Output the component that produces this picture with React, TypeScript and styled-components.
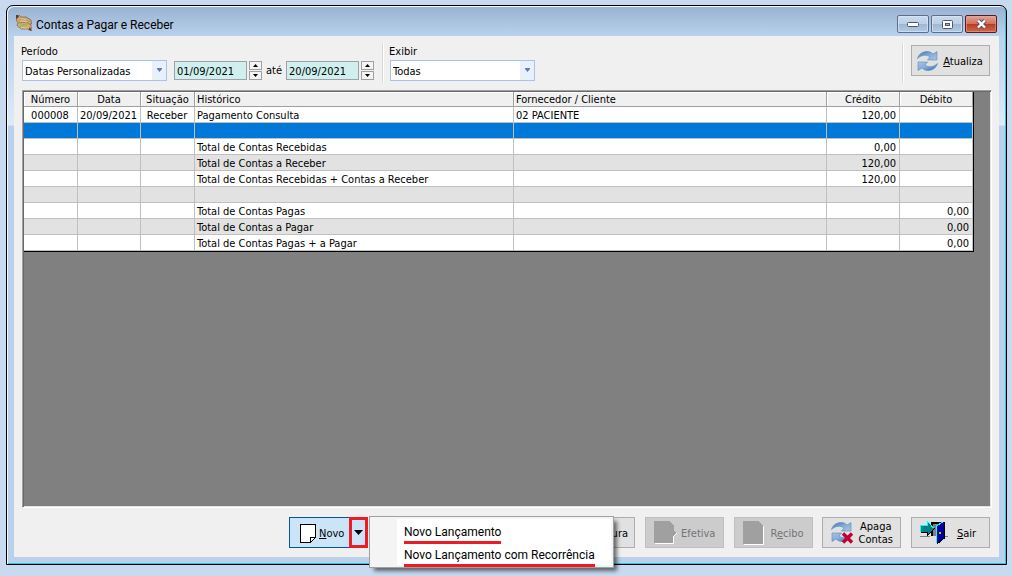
import React from "react";
import styled, { createGlobalStyle, css } from "styled-components";

const uiFont = `"DejaVu Sans Condensed", "Noto Sans", sans-serif`;
const shellFont = `Roboto, "Open Sans", sans-serif`;

const Global = createGlobalStyle`
  *, *::before, *::after { box-sizing: border-box; }
  body { margin: 0; background: #c8daf0; color: #000; font: 11px/14px ${uiFont}; }
  button, input, select { font: inherit; color: inherit; margin: 0; }
`;

const Desktop = styled.div`
  display: flex;
  min-height: 100vh;
  padding: 5px 5px 11px 6px;
`;

const Window = styled.main`
  flex: 1;
  min-width: 0;
  display: flex;
  flex-direction: column;
  padding: 0 7px 7px;
  border: 1px solid #000;
  border-radius: 7px 7px 0 0;
  background: linear-gradient(#97b2d1 0, #b9d1eb 30px, #dfeaf6 119px, #b9d1ea 120px);
  box-shadow: inset 1px 1px 0 #f4f8fc, inset -1px -1px 0 #35c3dd;
`;

const TitleBar = styled.header`
  display: flex;
  align-items: flex-start;
  height: 30px;
  padding: 9px 2px 0;
`;

const Title = styled.h1`
  flex: 1;
  margin: 2px 0 0 4px;
  font: 12px/16px ${shellFont};
`;

const WindowButtons = styled.div`
  display: flex;
  gap: 2px;
`;

const WindowButton = styled.button<{ $close?: boolean }>`
  display: grid;
  place-items: center;
  width: 32px;
  height: 18px;
  padding: 0;
  border: 1px solid ${(p) => (p.$close ? "#5b1a20" : "#5b6f8c")};
  border-radius: 2px;
  background: ${(p) =>
    p.$close
      ? "linear-gradient(#e3a597 0, #d2705c 48%, #b83a20 50%, #cf6a4c 100%)"
      : "linear-gradient(#c9daee 0, #bccfe6 48%, #9cb6d4 50%, #b3cae5 100%)"};
  box-shadow: inset 0 0 0 1px ${(p) => (p.$close ? "#e6a99a88" : "#dce8f5aa")};
`;

const Client = styled.div`
  flex: 1;
  display: flex;
  flex-direction: column;
  background: #f0f0f0;
  padding: 7px 7px 9px;
`;

const FilterBar = styled.div`
  display: flex;
  height: 40px;
`;

const Group = styled.div`
  display: flex;
  flex-direction: column;
`;

const DateGroup = styled(Group)`
  justify-content: flex-end;
  margin: 0 0 2px 7px;
`;

const Label = styled.label`
  line-height: 17px;
`;

const Line = styled.div`
  display: flex;
  align-items: center;
  height: 21px;
`;

const SelectWrap = styled.div`
  position: relative;
  width: 145px;
  height: 21px;
  margin-left: 1px;
`;

const Select = styled.select`
  appearance: none;
  width: 100%;
  height: 100%;
  padding: 2px 18px 0 2px;
  border: 1px solid #a9c2e6;
  border-radius: 0;
  background: linear-gradient(#e8f0fb, #e8f0fb) right / 14px 100% no-repeat #fff;
`;

const SelectArrow = styled.svg`
  position: absolute;
  right: 5px;
  top: 8px;
  pointer-events: none;
`;

const DateInput = styled.input`
  width: 73px;
  height: 19px;
  padding: 2px 2px 0;
  border: 1px solid #a0a0a8;
  background: #cff0ee;
`;

const Spinner = styled.div`
  display: flex;
  flex-direction: column;
  gap: 1px;
  margin-left: 2px;
`;

const SpinButton = styled.button`
  display: grid;
  place-items: center;
  width: 13px;
  height: 9px;
  padding: 0;
  border: 1px solid #a0a0a0;
  background: #f4f4f4;
`;

const Until = styled.span`
  padding: 0 4px;
`;

const Divider = styled.div<{ $after: number }>`
  width: 2px;
  margin: 0 ${(p) => p.$after}px 0 8px;
  border-left: 1px solid #d8d8d8;
  border-right: 1px solid #fff;
`;

const Spacer = styled.div`
  flex: 1;
`;

const RefreshSlot = styled.div`
  padding: 2px 2px 0 0;
`;

const Button = styled.button<{ $tight?: boolean }>`
  display: flex;
  align-items: center;
  width: 79px;
  height: 31px;
  padding: 0 4px 0 ${(p) => (p.$tight ? 5 : 8)}px;
  border: 1px solid #adadad;
  background: #e1e1e1;
  text-align: left;
  line-height: 13px;

  &:disabled {
    border-color: #bfbfbf;
    background: #ccc;
    color: #737378;
  }
`;

const IconSlot = styled.span<{ $wide?: boolean }>`
  flex: none;
  display: flex;
  min-width: ${(p) => (p.$wide ? 30 : 24)}px;
`;

const ButtonText = styled.span`
  flex: 1;
  padding-top: 1px;
  text-align: center;
`;

const GridPanel = styled.section`
  flex: 1;
  margin: 7px 0 0 1px;
  border: 1px solid;
  border-color: #a0a0a0 #fff #fff #a0a0a0;
  box-shadow: inset 1px 1px 0 #696969, inset -1px -1px 0 #e3e3e3;
  padding: 1px 17px 1px 1px;
  background: #808080;
`;

const Grid = styled.table`
  width: 100%;
  table-layout: fixed;
  border-collapse: separate;
  border-spacing: 0;
  border-right: 1px solid #000;
  border-bottom: 1px solid #000;
`;

type Align = "left" | "center" | "right";

const cell = css<{ $align: Align }>`
  font-weight: normal;
  text-align: ${(p) => p.$align};
  white-space: nowrap;
  overflow: hidden;
`;

const HeadCell = styled.th<{ $align: Align }>`
  ${cell}
  height: 15px;
  padding: 1px 2px 0;
  line-height: 13px;
  background: #f0f0f0;
  border-right: 1px solid #a0a0a0;
  border-bottom: 1px solid #a0a0a0;
  box-shadow: inset 1px 1px 0 #fff;
`;

const Cell = styled.td<{ $align: Align }>`
  ${cell}
  height: 16px;
  padding: 2px 3px 0 2px;
  line-height: 13px;
  border-right: 1px solid #c0c0c0;
  border-bottom: 1px solid #c0c0c0;
`;

const rowColors = { plain: "#fff", shaded: "#e2e2e2", selected: "#0078d7" };

const Row = styled.tr<{ $tone: keyof typeof rowColors }>`
  background: ${(p) => rowColors[p.$tone]};
`;

const Footer = styled.footer`
  display: flex;
  justify-content: flex-end;
  padding: 9px 2px 0 0;
`;

const Commands = styled.div`
  display: flex;
  justify-content: space-between;
  width: 701px;
`;

const CommandGroup = styled.div`
  display: flex;
  justify-content: space-between;
  width: 434px;
`;

const SplitButton = styled.div`
  position: relative;
  display: flex;
  width: 79px;
  height: 31px;
`;

const NewButton = styled.button`
  display: flex;
  align-items: center;
  gap: 3px;
  width: 60px;
  padding: 2px 0 0 10px;
  border: 1px solid #00559b;
  border-right: 0;
  background: #cce4f7;
`;

const DropButton = styled.button`
  display: grid;
  place-items: center;
  width: 19px;
  padding: 0;
  border: 3px solid #ed1c24;
  background: #cce4f7;
`;

const Menu = styled.ul`
  position: absolute;
  z-index: 1;
  left: 80px;
  top: -1px;
  width: 245px;
  margin: 0;
  padding: 3px 2px 1px 34px;
  list-style: none;
  border: 1px solid #a0a0a0;
  background: linear-gradient(90deg, #f4f4f4 27px, #fff 27px);
  box-shadow: inset 0 0 0 2px #f4f4f4, 4px 4px 4px -1px rgba(0, 0, 0, 0.55);
`;

const MenuItem = styled.li`
  height: 23px;
`;

const MenuButton = styled.button`
  display: block;
  padding: 3px 0 0;
  border: 0;
  border-bottom: 3px solid #ed1c24;
  background: none;
  font: 12px/18px ${shellFont};
  white-space: nowrap;
`;

const HandsIcon = () => (
  <svg width="16" height="16" viewBox="0 0 16 16">
    <path d="M0 0l3 0 2 2 5 0 5 3 .5 4-3 1-9-1-3-3z" fill="#dba174" stroke="#6e4a30" strokeWidth=".6" />
    <path d="M1 9l3-2 8 1 3 2 .5 5.500-2-.5-2-1-6 0-4-3z" fill="#e0a87c" stroke="#7c5232" strokeWidth=".6" />
    <path d="M3 4.500l6-.5 5 3M2 7.500l5 2 6-.5M3 11h8" fill="none" stroke="#7cc04c" strokeWidth="1" />
    <path d="M5 3.500l5 1M4 6l7 1M5 12.500l6 .5" stroke="#f2d2b2" strokeWidth=".7" />
    <path d="M0 0l2 0 1 2-3 2z" fill="#5a3d2a" />
    <path d="M14 12l1.500 4-3-1.500z" fill="#5a3d2a" />
  </svg>
);

const RefreshArt = () => (
  <>
    <defs>
      <linearGradient id="refreshTop" x1="0" y1="0" x2="1" y2="1">
        <stop offset="0" stopColor="#3c70b0" />
        <stop offset=".5" stopColor="#84abd8" />
        <stop offset="1" stopColor="#a9c6e6" />
      </linearGradient>
      <linearGradient id="refreshBottom" x1="0" y1="0" x2="1" y2="1">
        <stop offset="0" stopColor="#a9c6e6" />
        <stop offset=".5" stopColor="#84abd8" />
        <stop offset="1" stopColor="#2f64a6" />
      </linearGradient>
    </defs>
    <path d="M.5 7.500C2 2.500 6 .3 11 .5q3 .3 5 2.500l4-2.500v8.500h-9.500l2.500-3C9.500 3.500 5 3.500.5 7.500z" fill="url(#refreshTop)" stroke="#5b88bd" strokeWidth=".6" />
    <path d="M20.500 12.500C19 17.500 15 19.700 10 19.500q-3-.3-5-2.500L1 19.500V11h9.500L8 14c3.500 2.500 8 2.500 12.500-1.500z" fill="url(#refreshBottom)" stroke="#5b88bd" strokeWidth=".6" />
  </>
);

const RefreshIcon = () => (
  <svg width="21" height="20" viewBox="0 0 21 20">
    <RefreshArt />
  </svg>
);

const DeleteIcon = () => (
  <svg width="24" height="22" viewBox="0 0 24 22">
    <RefreshArt />
    <path d="M12 11.500l9 9M21 11.500l-9 9" stroke="#c00030" strokeWidth="3.400" />
  </svg>
);

const DoorIcon = () => (
  <svg width="28" height="23" viewBox="0 0 28 23" shapeRendering="crispEdges">
    <path d="M0 15.500h10M23 15.500h5" stroke="#808080" />
    <path d="M11 1h13v14H11z" fill="#000" />
    <path d="M13 3h8v12h-8z" fill="#808080" />
    <path d="M17 5l7-4v16l-7 5z" fill="#00009c" />
    <path d="M16.500 21.500V5l7-4.500" fill="none" stroke="#00ffff" />
    <path d="M24.500 1v16l-7 5.500" fill="none" stroke="#000" />
    <path d="M19 11h2v2h-2z" fill="#c8c800" />
    <path d="M0 4h7V0l7 7.500-7 7V11H0z" fill="#008080" />
    <path d="M.5 11V4.500h7V.5l6 6.500" fill="none" stroke="#00ffff" />
    <path d="M1 11.500h6.500v3l7-7" fill="none" stroke="#000" />
  </svg>
);

const PageIcon = () => (
  <svg width="16" height="19" viewBox="0 0 16 19" shapeRendering="crispEdges">
    <path d="M.5.5h15v13l-5 5H.5z" fill="#fff" stroke="#000" />
    <path d="M10.500 18.500v-5h5" fill="none" stroke="#000" />
  </svg>
);

const DisabledPageIcon = ({ arrow = false }: { arrow?: boolean }) => (
  <svg width="24" height="24" viewBox="0 0 24 24" shapeRendering="crispEdges">
    {arrow ? (
      <>
        <path d="M1 2h15l4 4v4l3 2-3 4v7H1z" fill="#fff" />
        <path d="M0 0h15l5 5v4l2 3-3 3v7H0z" fill="#a0a0a0" />
      </>
    ) : (
      <>
        <path d="M1 1h15l5 5v18H1z" fill="#fff" />
        <path d="M0 0h15l5 5v18H0z" fill="#a0a0a0" />
      </>
    )}
  </svg>
);

const Triangle = ({ up = false, size = 5 }: { up?: boolean; size?: number }) => {
  const h = (size + 1) / 2;
  return (
    <svg width={size} height={h} viewBox={`0 0 ${size} ${h}`}>
      <path d={up ? `M0 ${h}h${size}L${size / 2} 0z` : `M0 0h${size}L${size / 2} ${h}z`} fill="#000" />
    </svg>
  );
};

const Combo = ({ id, value }: { id: string; value: string }) => (
  <SelectWrap>
    <Select id={id} defaultValue={value}>
      <option>{value}</option>
    </Select>
    <SelectArrow width="5" height="4" viewBox="0 0 5 4">
      <path d="M0 0h5v1L2.500 4 0 1z" fill="#5b7fb5" />
    </SelectArrow>
  </SelectWrap>
);

const DateField = ({ label, value }: { label: string; value: string }) => (
  <>
    <DateInput aria-label={label} defaultValue={value} />
    <Spinner>
      <SpinButton aria-label={`${label}: avançar`}><Triangle up /></SpinButton>
      <SpinButton aria-label={`${label}: recuar`}><Triangle /></SpinButton>
    </Spinner>
  </>
);

const columns: { title: string; width: number; align: Align; head: Align }[] = [
  { title: "Número", width: 54, align: "center", head: "center" },
  { title: "Data", width: 63, align: "center", head: "center" },
  { title: "Situação", width: 54, align: "center", head: "center" },
  { title: "Histórico", width: 319, align: "left", head: "left" },
  { title: "Fornecedor / Cliente", width: 313, align: "left", head: "left" },
  { title: "Crédito", width: 73, align: "right", head: "center" },
  { title: "Débito", width: 73, align: "right", head: "center" },
];

const rows: { tone: keyof typeof rowColors; cells: string[] }[] = [
  { tone: "plain", cells: ["000008", "20/09/2021", "Receber", "Pagamento Consulta", "02 PACIENTE", "120,00", ""] },
  { tone: "selected", cells: ["", "", "", "", "", "", ""] },
  { tone: "plain", cells: ["", "", "", "Total de Contas Recebidas", "", "0,00", ""] },
  { tone: "shaded", cells: ["", "", "", "Total de Contas a Receber", "", "120,00", ""] },
  { tone: "plain", cells: ["", "", "", "Total de Contas Recebidas + Contas a Receber", "", "120,00", ""] },
  { tone: "shaded", cells: ["", "", "", "", "", "", ""] },
  { tone: "plain", cells: ["", "", "", "Total de Contas Pagas", "", "", "0,00"] },
  { tone: "shaded", cells: ["", "", "", "Total de Contas a Pagar", "", "", "0,00"] },
  { tone: "plain", cells: ["", "", "", "Total de Contas Pagas + a Pagar", "", "", "0,00"] },
];

export default function App() {
  return (
    <>
      <Global />
      <Desktop>
        <Window>
          <TitleBar>
            <HandsIcon />
            <Title>Contas a Pagar e Receber</Title>
            <WindowButtons>
              <WindowButton aria-label="Minimizar">
                <svg width="12" height="5"><rect x=".5" y=".5" width="11" height="4" rx="1" fill="#fff" stroke="#535666" /></svg>
              </WindowButton>
              <WindowButton aria-label="Maximizar">
                <svg width="11" height="9"><rect x=".5" y=".5" width="10" height="8" rx="1" fill="#fff" stroke="#535666" /><rect x="3.500" y="3.500" width="4" height="2" fill="#9cb6d4" stroke="#535666" /></svg>
              </WindowButton>
              <WindowButton $close aria-label="Fechar">
                <svg width="13" height="10" viewBox="0 0 13 10"><path d="M3 1.500l7 7M10 1.500l-7 7" stroke="#535666" strokeWidth="4.400" /><path d="M3 1.500l7 7M10 1.500l-7 7" stroke="#fff" strokeWidth="2.400" /></svg>
              </WindowButton>
            </WindowButtons>
          </TitleBar>

          <Client>
            <FilterBar>
              <Group>
                <Label htmlFor="periodo">Período</Label>
                <Line><Combo id="periodo" value="Datas Personalizadas" /></Line>
              </Group>
              <DateGroup>
                <Line>
                  <DateField label="Data inicial" value="01/09/2021" />
                  <Until>até</Until>
                  <DateField label="Data final" value="20/09/2021" />
                </Line>
              </DateGroup>
              <Divider $after={5} />
              <Group>
                <Label htmlFor="exibir">Exibir</Label>
                <Line><Combo id="exibir" value="Todas" /></Line>
              </Group>
              <Spacer />
              <Divider $after={7} />
              <RefreshSlot>
                <Button $tight><IconSlot><RefreshIcon /></IconSlot><ButtonText><u>A</u>tualiza</ButtonText></Button>
              </RefreshSlot>
            </FilterBar>

            <GridPanel>
              <Grid>
                <colgroup>
                  {columns.map((c) => <col key={c.title} width={c.width} />)}
                </colgroup>
                <thead>
                  <tr>{columns.map((c) => <HeadCell key={c.title} $align={c.head}>{c.title}</HeadCell>)}</tr>
                </thead>
                <tbody>
                  {rows.map((r, i) => (
                    <Row key={i} $tone={r.tone}>
                      {r.cells.map((text, j) => <Cell key={j} $align={columns[j].align}>{text}</Cell>)}
                    </Row>
                  ))}
                </tbody>
              </Grid>
            </GridPanel>

            <Footer>
              <Commands>
                <SplitButton>
                  <NewButton><PageIcon /><span><u>N</u>ovo</span></NewButton>
                  <DropButton aria-label="Mais opções"><Triangle size={9} /></DropButton>
                  <Menu>
                    <MenuItem><MenuButton>Novo Lançamento</MenuButton></MenuItem>
                    <MenuItem><MenuButton>Novo Lançamento com Recorrência</MenuButton></MenuItem>
                  </Menu>
                </SplitButton>
                <CommandGroup>
                  <Button><IconSlot $wide><PageIcon /></IconSlot><ButtonText>Fatura</ButtonText></Button>
                  <Button disabled><IconSlot><DisabledPageIcon arrow /></IconSlot><ButtonText>Efetiva</ButtonText></Button>
                  <Button disabled><IconSlot><DisabledPageIcon /></IconSlot><ButtonText>R<u>e</u>cibo</ButtonText></Button>
                  <Button><IconSlot><DeleteIcon /></IconSlot><ButtonText>Apaga Contas</ButtonText></Button>
                  <Button><IconSlot><DoorIcon /></IconSlot><ButtonText><u>S</u>air</ButtonText></Button>
                </CommandGroup>
              </Commands>
            </Footer>
          </Client>
        </Window>
      </Desktop>
    </>
  );
}
